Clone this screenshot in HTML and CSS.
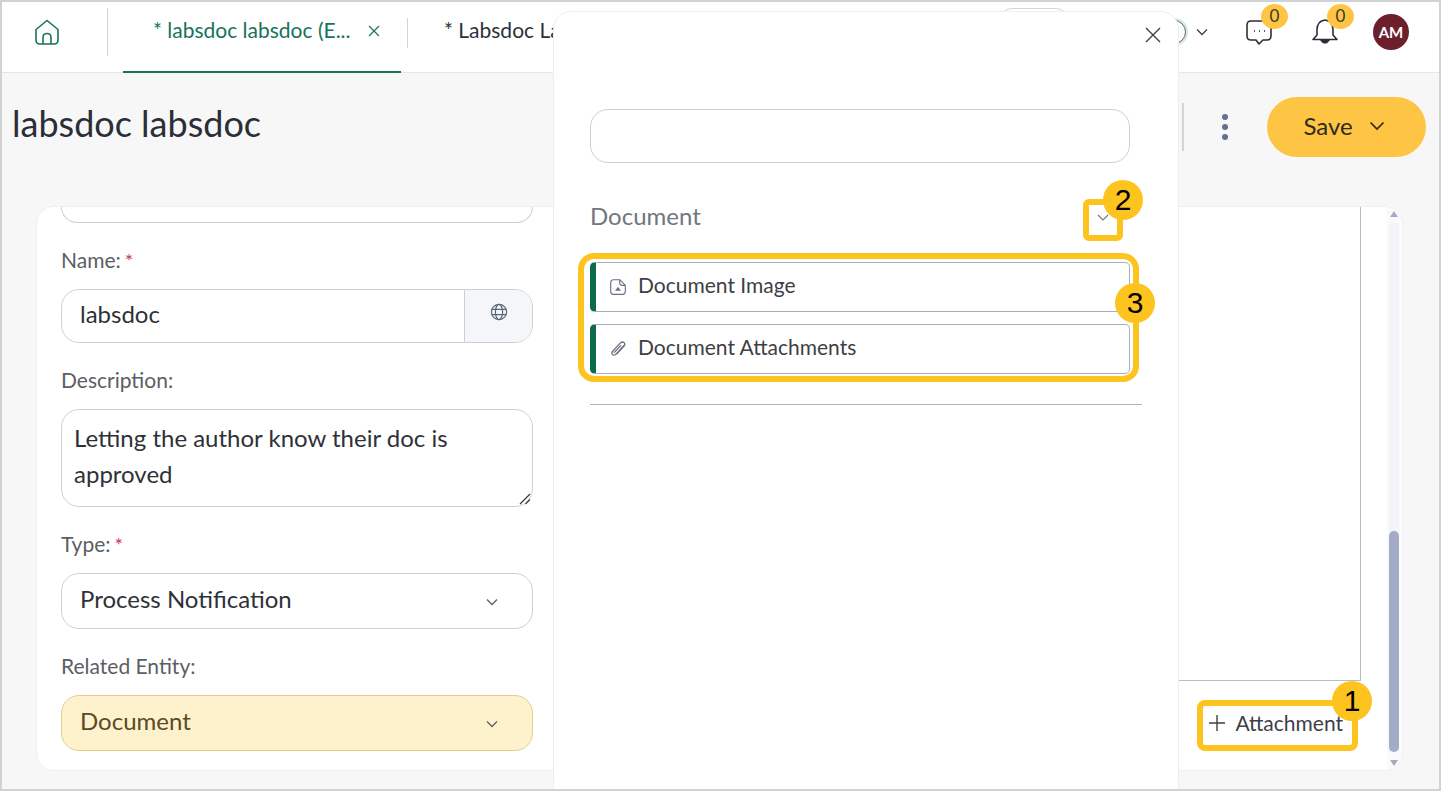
FILE: index.html
```html
<!DOCTYPE html>
<html lang="en">
<head>
    <meta charset="UTF-8">
    <meta name="viewport" content="width=device-width, initial-scale=1.0">
    <title>labsdoc labsdoc</title>
    <link rel="stylesheet" href="styles.css">
</head>
<body>
    <div class="frame">
        <!-- Top bar -->
        <header class="topbar">
            <div class="home-cell">
                <svg class="home-icon" width="28" height="28" viewBox="0 0 28 28" fill="none" stroke="#17735a" stroke-width="1.6" stroke-linejoin="round">
                    <path d="M3 11.5 L14 2.5 L25 11.5 V22 Q25 26 21 26 H7 Q3 26 3 22 Z"/>
                    <path d="M10 26 V19.5 Q10 15.5 14 15.5 Q18 15.5 18 19.5 V26"/>
                </svg>
            </div>
            <div class="tab tab-active">
                <span class="tab-label">* labsdoc labsdoc (E...</span>
                <svg class="tab-close" width="12" height="12" viewBox="0 0 12 12" stroke="#17735a" stroke-width="1.2"><path d="M1 1 L11 11 M11 1 L1 11"/></svg>
            </div>
            <div class="tab tab-second">
                <span class="tab-label">* Labsdoc Labsdoc</span>
            </div>
            <div class="top-actions">
                <div class="search-pill"></div>
                <div class="lang-circle"></div>
                <svg class="top-chevron" width="12" height="8" viewBox="0 0 12 8" fill="none" stroke="#3c4048" stroke-width="1.3"><path d="M1 1.5 L6 6.5 L11 1.5"/></svg>
                <div class="notify">
                    <svg width="28" height="28" viewBox="0 0 28 28" fill="none" stroke="#2b3038" stroke-width="1.6" stroke-linejoin="round">
                        <path d="M6 3 H22 Q26 3 26 7 V18 Q26 22 22 22 H18 L14 26 L11 22 H6 Q2 22 2 18 V7 Q2 3 6 3 Z"/>
                        <path d="M9 13 h.8 M14 13 h.8 M19 13 h.8" stroke-width="1.8"/>
                    </svg>
                    <span class="badge">0</span>
                </div>
                <div class="notify">
                    <svg width="28" height="28" viewBox="0 0 28 28" fill="none" stroke="#2b3038" stroke-width="1.6" stroke-linejoin="round">
                        <path d="M14 2 Q22 3 22 12 V17 L26 21.5 H2 L6 17 V12 Q6 3 14 2 Z"/>
                        <path d="M10 22 Q14 28 18 22 Z" fill="#2b3038"/>
                    </svg>
                    <span class="badge">0</span>
                </div>
                <div class="avatar">AM</div>
            </div>
        </header>

        <!-- Title row -->
        <div class="title-row">
            <h1>labsdoc labsdoc</h1>
            <div class="title-actions">
                <span class="title-divider"></span>
                <span class="more-dots"><i></i><i></i><i></i></span>
                <button class="save-btn">Save
                    <svg width="16" height="10" viewBox="0 0 16 10" fill="none" stroke="#2f2a1a" stroke-width="1.7"><path d="M1.5 1.5 L8 8 L14.5 1.5"/></svg>
                </button>
            </div>
        </div>

        <!-- Main card -->
        <div class="card">
            <div class="form-col">
                <div class="clipped-input"></div>

                <label class="field-label">Name:<span class="req">*</span></label>
                <div class="input-group">
                    <span class="input-value">labsdoc</span>
                    <span class="input-addon">
                        <svg width="18" height="18" viewBox="0 0 18 18" fill="none" stroke="#5d6678" stroke-width="1.2">
                            <circle cx="9" cy="9" r="7.6"/>
                            <ellipse cx="9" cy="9" rx="3.6" ry="7.6"/>
                            <path d="M1.6 6.4 H16.4 M1.6 11.6 H16.4"/>
                        </svg>
                    </span>
                </div>

                <label class="field-label">Description:</label>
                <div class="textarea">Letting the author know their doc is approved
                    <svg class="resize-grip" width="12" height="12" viewBox="0 0 12 12" stroke="#333" stroke-width="1.1"><path d="M1 11 L11 1 M6.5 11 L11 6.5"/></svg>
                </div>

                <label class="field-label">Type:<span class="req">*</span></label>
                <div class="select">
                    <span>Process Notification</span>
                    <svg width="12" height="8" viewBox="0 0 12 8" fill="none" stroke="#5a5f68" stroke-width="1.3"><path d="M1 1.5 L6 6.5 L11 1.5"/></svg>
                </div>

                <label class="field-label">Related Entity:</label>
                <div class="select select-highlight">
                    <span>Document</span>
                    <svg width="12" height="8" viewBox="0 0 12 8" fill="none" stroke="#5a5f68" stroke-width="1.3"><path d="M1 1.5 L6 6.5 L11 1.5"/></svg>
                </div>
            </div>

            <div class="editor-col">
                <div class="editor-box"></div>
                <div class="attach-row">
                    <span class="attach-btn">
                        <svg width="16" height="16" viewBox="0 0 16 16" stroke="#3c4048" stroke-width="1.4"><path d="M8 0 V16 M0 8 H16"/></svg>
                        Attachment
                    </span>
                </div>
            </div>

            <div class="scrollbar">
                <span class="arrow-up"></span>
                <div class="scroll-track"><div class="scroll-thumb"></div></div>
                <span class="arrow-down"></span>
            </div>
        </div>

        <!-- Side modal -->
        <aside class="modal">
            <div class="modal-close">
                <svg width="16" height="16" viewBox="0 0 16 16" stroke="#3c4048" stroke-width="1.4"><path d="M1 1 L15 15 M15 1 L1 15"/></svg>
            </div>
            <div class="modal-search"></div>
            <div class="group-head">
                <span>Document</span>
                <svg width="12" height="7" viewBox="0 0 12 7" fill="none" stroke="#73767c" stroke-width="1.1"><path d="M1 1 L6 6 L11 1"/></svg>
            </div>
            <div class="list-item">
                <svg width="18" height="18" viewBox="0 0 16 16" fill="none" stroke="#6b7080" stroke-width="1" stroke-linejoin="round">
                    <path d="M4 1.5 H9.5 L14.5 6.5 V12 Q14.5 14.5 12 14.5 H4 Q1.5 14.5 1.5 12 V4 Q1.5 1.5 4 1.5 Z"/>
                    <path d="M9.5 1.5 V4.5 Q9.5 6.5 11.5 6.5 H14.5"/>
                    <path d="M8 7.8 L10.6 11.4 H5.4 Z" fill="#6b7080" stroke="none"/>
                </svg>
                <span>Document Image</span>
            </div>
            <div class="list-item">
                <svg width="18" height="18" viewBox="0 0 16 16" fill="none" stroke="#6b7080" stroke-width="1.1" stroke-linecap="round">
                    <path d="M13.5 4.5 L6.2 12.6 Q4.6 14.2 3.1 13 Q1.8 11.6 3.3 10 L10.2 2.6 Q11.8 1.1 13.4 2.3 Q14.8 3.8 13.4 5.4 L7 12.3"/>
                    <path d="M10.4 5 L4.8 11"/>
                </svg>
                <span>Document Attachments</span>
            </div>
            <div class="modal-rule"></div>
        </aside>

        <!-- Numbered callouts over the screenshot -->
        <div class="callout-box box-one"></div>
        <div class="callout-num num-one">1</div>
        <div class="callout-box box-two"></div>
        <div class="callout-num num-two">2</div>
        <div class="callout-box box-three"></div>
        <div class="callout-num num-three">3</div>
    </div>
</body>
</html>
```

FILE: styles.css
```css
* {
    box-sizing: border-box;
}
body {
    margin: 0;
    font-family: Lato, "Open Sans", sans-serif;
    color: #2e3138;
}
.frame {
    position: relative;
    width: 1441px;
    height: 791px;
    border: 2px solid #d2d2d2;
    background: #f7f7f8;
    overflow: hidden;
}

/* top bar */
.topbar {
    display: flex;
    height: 71px;
    background: white;
    border-bottom: 1px solid #e6e6e8;
}
.home-cell {
    width: 106px;
    height: 48px;
    margin-top: 6px;
    border-right: 1px solid #d4d4d6;
    padding: 10px 0 0 31px;
}
.tab {
    display: flex;
    align-items: center;
    height: 71px;
    font-size: 21px;
    padding-bottom: 14px;
}
.tab-active {
    width: 278px;
    margin-left: 15px;
    padding-left: 30px;
    color: #17735a;
    border-bottom: 2px solid #17735a;
    height: 71px;
}
.tab-close {
    margin: 2px 0 0 17px;
}
.tab-second {
    margin-left: 6px;
    padding: 0 0 16px 37px;
    position: relative;
    width: 300px;
}
.tab-second::before {
    content: "";
    position: absolute;
    left: 0;
    top: 16px;
    height: 30px;
    border-left: 1px solid #d4d4d6;
}
.top-actions {
    margin-left: auto;
    display: flex;
    align-items: center;
    padding: 0 30px 10px 0;
}
.search-pill {
    width: 72px;
    height: 48px;
    margin: 0 92px 0 0;
    border: 1px solid #d4d4d6;
    border-radius: 14px;
}
.lang-circle {
    width: 24px;
    height: 24px;
    border-radius: 50%;
    background: white;
    border: 1px solid #5d6678;
    box-shadow: 0 0 0 2px #d5e6e1;
}
.top-chevron {
    margin-left: 10px;
}
.notify {
    position: relative;
    width: 28px;
    height: 28px;
    margin-left: 38px;
}
.top-chevron + .notify {
    margin-left: 37px;
}
.badge {
    position: absolute;
    left: 16px;
    top: -14px;
    width: 27px;
    height: 25px;
    border-radius: 50%;
    background: #fdc543;
    color: #3a3a2a;
    font-size: 17px;
    text-align: center;
    line-height: 24px;
}
.avatar {
    width: 36px;
    height: 36px;
    margin-left: 34px;
    border-radius: 50%;
    background: #6d1f2b;
    color: white;
    font-size: 15px;
    font-weight: 700;
    text-align: center;
    line-height: 36px;
}

/* title row */
.title-row {
    display: flex;
    align-items: center;
    height: 133px;
    padding: 0 13px 0 10px;
}
.title-row h1 {
    margin: 0 0 34px;
    font-size: 36px;
    font-weight: 400;
    color: #2b2e36;
}
.title-actions {
    margin-left: auto;
    display: flex;
    align-items: center;
    margin-bottom: 26px;
}
.title-divider {
    width: 2px;
    height: 48px;
    background: #d4d4d6;
}
.more-dots {
    display: flex;
    flex-direction: column;
    gap: 4px;
    margin: 0 39px 0 38px;
}
.more-dots i {
    width: 6px;
    height: 6px;
    border-radius: 50%;
    background: #666f8f;
}
.save-btn {
    display: flex;
    align-items: center;
    justify-content: center;
    gap: 16px;
    width: 159px;
    height: 60px;
    padding: 0 5px 2px 0;
    border: none;
    border-radius: 30px;
    background: #fdc543;
    color: #2f2a1a;
    font-family: inherit;
    font-size: 24px;
}

/* main card */
.card {
    display: flex;
    height: 565px;
    margin-left: 34px;
    width: 1367px;
    background: white;
    border: 1px solid #f0f0f2;
    border-radius: 18px;
    overflow: hidden;
}
.form-col {
    width: 520px;
    padding-left: 24px;
    flex-shrink: 0;
}
.clipped-input {
    width: 472px;
    height: 16px;
    border: 1px solid #d0d0d4;
    border-top: none;
    border-radius: 0 0 16px 16px;
    margin-bottom: 23px;
}
.field-label {
    display: block;
    font-size: 21px;
    line-height: 28px;
    color: #5b5e64;
    margin-bottom: 15px;
}
.req {
    color: #c8385a;
    margin-left: 4px;
    font-size: 20px;
}
.input-group {
    display: flex;
    width: 472px;
    height: 54px;
    border: 1px solid #d0d0d4;
    border-radius: 18px;
    overflow: hidden;
    margin-bottom: 23px;
}
.input-value {
    flex: 1;
    padding-left: 18px;
    font-size: 24px;
    line-height: 47px;
}
.input-addon {
    width: 68px;
    background: #f4f6fa;
    border-left: 1px solid #d0d0d4;
    padding: 13px 0 0 25px;
}
.textarea {
    position: relative;
    width: 472px;
    height: 98px;
    padding: 10px 40px 0 12px;
    border: 1px solid #d0d0d4;
    border-radius: 18px;
    font-size: 24px;
    line-height: 36px;
    margin-bottom: 23px;
}
.resize-grip {
    position: absolute;
    right: 1px;
    bottom: 1px;
}
.select {
    display: flex;
    align-items: center;
    justify-content: space-between;
    width: 472px;
    height: 56px;
    padding: 0 34px 5px 18px;
    border: 1px solid #d0d0d4;
    border-radius: 18px;
    font-size: 24px;
    margin-bottom: 23px;
}
.select svg {
    margin-top: 6px;
}
.select-highlight {
    background: #fef2cc;
    border-color: #dfd08f;
    color: #5a4a26;
}

/* right side of the card */
.editor-col {
    flex: 1;
    display: flex;
    flex-direction: column;
}
.editor-box {
    height: 474px;
    margin-right: 10px;
    border-right: 1px solid #bcbcc0;
    border-bottom: 1px solid #bcbcc0;
}
.attach-row {
    display: flex;
    justify-content: flex-end;
    padding: 29px 28px 0 0;
}
.attach-btn {
    display: flex;
    align-items: center;
    gap: 10px;
    font-size: 21px;
    color: #3c4048;
}
.scrollbar {
    width: 14px;
    margin: 0 1px 0 16px;
    padding-bottom: 4px;
    display: flex;
    flex-direction: column;
    align-items: center;
    flex-shrink: 0;
    background: #fafafc;
}
.arrow-up, .arrow-down {
    width: 0;
    height: 0;
    border-left: 4px solid transparent;
    border-right: 4px solid transparent;
}
.arrow-up {
    margin: 4px 0 6px;
    border-bottom: 6px solid #a3abc6;
}
.arrow-down {
    margin-top: 8px;
    border-top: 6px solid #a3abc6;
}
.scroll-track {
    flex: 1;
    width: 10px;
    display: flex;
    align-items: flex-end;
    background: #f3f4f8;
}
.scroll-thumb {
    width: 100%;
    height: 221px;
    background: #a3abc6;
    border-radius: 5px;
}

/* side modal */
.modal {
    position: absolute;
    left: 551px;
    top: 9px;
    width: 626px;
    height: 790px;
    padding: 0 37px 0 36px;
    background: white;
    border: 1px solid #eeeeef;
    border-radius: 18px 18px 0 0;
}
.modal-close {
    display: flex;
    justify-content: flex-end;
    height: 97px;
    padding: 15px 0 0;
    margin-right: -20px;
}
.modal-search {
    width: 540px;
    height: 54px;
    border: 1px solid #d0d0d4;
    border-radius: 18px;
}
.group-head {
    display: flex;
    align-items: center;
    justify-content: space-between;
    width: 519px;
    height: 99px;
    padding-top: 6px;
    font-size: 24px;
    color: #73767c;
}
.group-head svg {
    margin-top: 4px;
}
.list-item {
    display: flex;
    align-items: center;
    gap: 11px;
    width: 540px;
    height: 50px;
    margin-bottom: 12px;
    padding: 0 0 5px 13px;
    border: 1px solid #a9adbb;
    border-left: 6px solid #0b6b4f;
    border-radius: 5px;
    font-size: 21px;
    color: #3c3f46;
}
.list-item svg {
    margin-top: 5px;
}
.modal-rule {
    width: 552px;
    margin-top: 30px;
    border-top: 1px solid #b4b4b8;
}

/* callouts */
.callout-box {
    position: absolute;
    border: 6px solid #fdc31f;
}
.box-one {
    left: 1195px;
    top: 698px;
    width: 161px;
    height: 51px;
    border-radius: 8px;
}
.box-two {
    left: 1081px;
    top: 197px;
    width: 40px;
    height: 42px;
    border-radius: 6px;
}
.box-three {
    left: 576px;
    top: 251px;
    width: 561px;
    height: 129px;
    border-radius: 16px;
}
.callout-num {
    position: absolute;
    width: 40px;
    height: 40px;
    border-radius: 50%;
    background: #fdc31f;
    color: black;
    font-family: "Liberation Sans", sans-serif;
    font-size: 30px;
    line-height: 40px;
    text-align: center;
}
.num-one {
    left: 1330px;
    top: 679px;
}
.num-two {
    left: 1101px;
    top: 178px;
}
.num-three {
    left: 1113px;
    top: 281px;
}
```
